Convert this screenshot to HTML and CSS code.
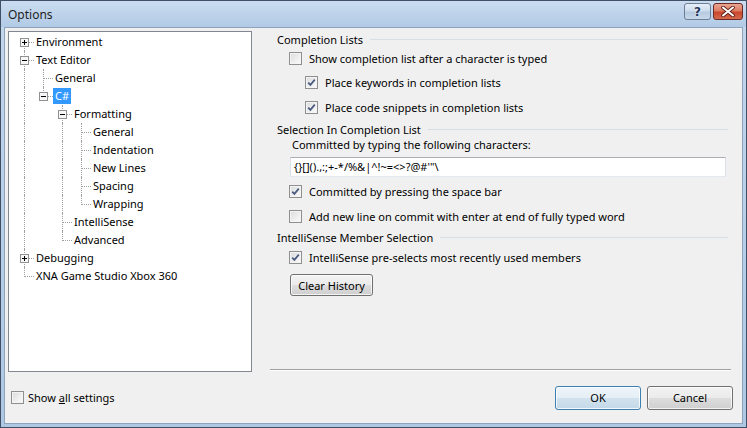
FILE: index.html
```html
<!DOCTYPE html>
<html>
<head>
<meta charset="utf-8">
<title>Options</title>
<link rel="stylesheet" href="styles.css">
</head>
<body>
<div class="window">
  <div class="titlebar">
    <span class="title">Options</span>
    <div class="caption-btns">
      <div class="cbtn help">?</div>
      <div class="cbtn close">
        <svg width="14" height="11" viewBox="0 0 14 11"><path d="M2 1.5 L12 9.5 M12 1.5 L2 9.5" stroke="#5b1c12" stroke-width="3.6" stroke-linecap="round"/><path d="M2 1.5 L12 9.5 M12 1.5 L2 9.5" stroke="#fff" stroke-width="2" stroke-linecap="round"/></svg>
      </div>
    </div>
  </div>
  <div class="client">
    <div class="main">
      <div class="tree">
        <div class="row"><span class="cell first"><span class="exp"><svg width="9" height="9"><rect x="0.5" y="0.5" width="8" height="8" fill="#f7f7f7" stroke="#919191"/><path d="M2 4.5h5M4.5 2v5" stroke="#000"/></svg></span></span><span class="label">Environment</span></div>
        <div class="row"><span class="cell tee"><span class="exp"><svg width="9" height="9"><rect x="0.5" y="0.5" width="8" height="8" fill="#f7f7f7" stroke="#919191"/><path d="M2 4.5h5" stroke="#000"/></svg></span></span><span class="label">Text Editor</span></div>
        <div class="row"><span class="cell pipe"></span><span class="cell tee"></span><span class="label">General</span></div>
        <div class="row"><span class="cell pipe"></span><span class="cell elbow"><span class="exp"><svg width="9" height="9"><rect x="0.5" y="0.5" width="8" height="8" fill="#f7f7f7" stroke="#919191"/><path d="M2 4.5h5" stroke="#000"/></svg></span></span><span class="label selected">C#</span></div>
        <div class="row"><span class="cell pipe"></span><span class="cell"></span><span class="cell tee"><span class="exp"><svg width="9" height="9"><rect x="0.5" y="0.5" width="8" height="8" fill="#f7f7f7" stroke="#919191"/><path d="M2 4.5h5" stroke="#000"/></svg></span></span><span class="label">Formatting</span></div>
        <div class="row"><span class="cell pipe"></span><span class="cell"></span><span class="cell pipe"></span><span class="cell tee"></span><span class="label">General</span></div>
        <div class="row"><span class="cell pipe"></span><span class="cell"></span><span class="cell pipe"></span><span class="cell tee"></span><span class="label">Indentation</span></div>
        <div class="row"><span class="cell pipe"></span><span class="cell"></span><span class="cell pipe"></span><span class="cell tee"></span><span class="label">New Lines</span></div>
        <div class="row"><span class="cell pipe"></span><span class="cell"></span><span class="cell pipe"></span><span class="cell tee"></span><span class="label">Spacing</span></div>
        <div class="row"><span class="cell pipe"></span><span class="cell"></span><span class="cell pipe"></span><span class="cell elbow"></span><span class="label">Wrapping</span></div>
        <div class="row"><span class="cell pipe"></span><span class="cell"></span><span class="cell tee"></span><span class="label">IntelliSense</span></div>
        <div class="row"><span class="cell pipe"></span><span class="cell"></span><span class="cell elbow"></span><span class="label">Advanced</span></div>
        <div class="row"><span class="cell tee"><span class="exp"><svg width="9" height="9"><rect x="0.5" y="0.5" width="8" height="8" fill="#f7f7f7" stroke="#919191"/><path d="M2 4.5h5M4.5 2v5" stroke="#000"/></svg></span></span><span class="label">Debugging</span></div>
        <div class="row"><span class="cell elbow"></span><span class="label">XNA Game Studio Xbox 360</span></div>
      </div>
      <div class="panel">
        <div class="settings">
          <div class="group-head h1"><span>Completion Lists</span><span class="rule"></span></div>
          <div class="check r-cb1 ind1"><span class="cb"></span><span>Show completion list after a character is typed</span></div>
          <div class="check r-cb2 ind2"><span class="cb checked"><svg width="11" height="11" viewBox="0 0 11 11"><path d="M2.2 5.6 L4.4 7.9 L8.8 2.6" fill="none" stroke="#4a5a80" stroke-width="1.7"/></svg></span><span>Place keywords in completion lists</span></div>
          <div class="check r-cb3 ind2"><span class="cb checked"><svg width="11" height="11" viewBox="0 0 11 11"><path d="M2.2 5.6 L4.4 7.9 L8.8 2.6" fill="none" stroke="#4a5a80" stroke-width="1.7"/></svg></span><span>Place code snippets in completion lists</span></div>
          <div class="group-head h2"><span>Selection In Completion List</span><span class="rule"></span></div>
          <div class="field-label">Committed by typing the following characters:</div>
          <div class="textbox">{}[]().,:;+-*/%&amp;|^!~=&lt;&gt;?@#'"\</div>
          <div class="check r-cb4 ind1"><span class="cb checked"><svg width="11" height="11" viewBox="0 0 11 11"><path d="M2.2 5.6 L4.4 7.9 L8.8 2.6" fill="none" stroke="#4a5a80" stroke-width="1.7"/></svg></span><span>Committed by pressing the space bar</span></div>
          <div class="check r-cb5 ind1"><span class="cb"></span><span>Add new line on commit with enter at end of fully typed word</span></div>
          <div class="group-head h3"><span>IntelliSense Member Selection</span><span class="rule"></span></div>
          <div class="check r-cb6 ind1"><span class="cb checked"><svg width="11" height="11" viewBox="0 0 11 11"><path d="M2.2 5.6 L4.4 7.9 L8.8 2.6" fill="none" stroke="#4a5a80" stroke-width="1.7"/></svg></span><span>IntelliSense pre-selects most recently used members</span></div>
          <div class="btn clear">Clear History</div>
        </div>
        <div class="sep"></div>
      </div>
    </div>
    <div class="bottom">
      <div class="check show-all"><span class="cb"></span><span>Show <u>a</u>ll settings</span></div>
      <div class="dlg-btns">
        <div class="btn dlg default">OK</div>
        <div class="btn dlg">Cancel</div>
      </div>
    </div>
  </div>
</div>
</body>
</html>
```
FILE: styles.css
```css
* { box-sizing: border-box; }
body {
  margin: 0;
  font-family: "Noto Sans", "Open Sans", sans-serif;
  font-size: 11px;
  color: #000;
  background: #fff;
}
.window {
  width: 747px;
  height: 428px;
  border: 1px solid #3f5064;
  background: linear-gradient(to bottom, #c3d7ec 0%, #b6cde7 60%, #aec7e3 100%);
  padding: 0 3px 3px 3px;
  display: flex;
  flex-direction: column;
}
.titlebar {
  height: 26px;
  flex: none;
  display: flex;
  align-items: center;
  justify-content: space-between;
  background: linear-gradient(to bottom, #cadcef 0%, #bfd4eb 45%, #b2cae6 100%);
  margin: 0 -3px;
  padding: 0 3px 0 7px;
}
.title {
  font-size: 12px;
  color: #1e1e1e;
  padding-top: 1px;
}
.caption-btns {
  display: flex;
  align-self: flex-start;
  margin-top: 2px;
  gap: 2px;
}
.cbtn {
  height: 17px;
  border: 1px solid #6c7f96;
  border-radius: 3px;
  display: flex;
  align-items: center;
  justify-content: center;
}
.help {
  width: 27px;
  background: linear-gradient(to bottom, #e6eef7 0%, #ccdcec 48%, #b5c9df 52%, #c7d8ea 100%);
  color: #22365a;
  font-family: "DejaVu Sans", sans-serif;
  font-size: 12px;
  font-weight: bold;
  text-shadow: 0 0 2px #fff;
  line-height: 1;
}
.close {
  width: 30px;
  border-color: #6b2a22;
  background: linear-gradient(to bottom, #e9a693 0%, #dc7c64 45%, #c9462b 55%, #d56a4e 100%);
}
.client {
  flex: 1;
  border: 1px solid #8da3bc;
  background: #f0f0f0;
  display: flex;
  flex-direction: column;
}
.main {
  height: 344px;
  flex: none;
  display: flex;
  padding: 3px 0 0 3px;
}
.tree {
  width: 244px;
  height: 341px;
  border: 1px solid #828790;
  background: #fff;
  padding: 1px 0 0 6px;
  flex: none;
}
.row {
  height: 18px;
  display: flex;
  align-items: center;
}
.cell {
  width: 19px;
  height: 18px;
  flex: none;
  position: relative;
  display: flex;
  align-items: center;
  padding-left: 5px;
}
.cell.pipe::before,
.cell.tee::before,
.cell.elbow::before,
.cell.first::before {
  content: "";
  position: absolute;
  left: 9px;
  border-left: 1px dotted #a0a0a0;
}
.cell.pipe::before, .cell.tee::before { top: 0; bottom: 0; }
.cell.elbow::before { top: 0; height: 10px; }
.cell.first::before { top: 9px; bottom: 0; }
.cell.tee::after,
.cell.elbow::after,
.cell.first::after {
  content: "";
  position: absolute;
  left: 10px;
  width: 9px;
  top: 9px;
  border-top: 1px dotted #a0a0a0;
}
.exp {
  width: 9px;
  height: 9px;
  position: relative;
  z-index: 1;
  display: block;
}
.exp svg { display: block; }
.label {
  padding: 0 2px;
  height: 16px;
  line-height: 16px;
  white-space: nowrap;
}
.label.selected {
  background: #3399ff;
  color: #fff;
}
.panel {
  margin-left: 18px;
  width: 461px;
  display: flex;
  flex-direction: column;
}
.settings {
  flex: 1;
  padding-left: 7px;
  padding-right: 3px;
}
.group-head {
  height: 16px;
  display: flex;
  align-items: center;
  white-space: nowrap;
}
.group-head .rule {
  flex: 1;
  border-top: 1px solid #d5dfe5;
  margin-left: 7px;
  margin-top: 1px;
}
.h2 { margin-top: 5px; }
.h3 { margin-top: 4px; }
.check {
  height: 18px;
  display: flex;
  align-items: center;
  white-space: nowrap;
}
.ind1 { padding-left: 12px; }
.ind2 { padding-left: 28px; }
.r-cb1 { margin-top: 2px; }
.r-cb2 { margin-top: 6px; }
.r-cb3 { margin-top: 7px; }
.r-cb4 { margin-top: 5px; }
.r-cb5 { margin-top: 7px; }
.r-cb6 { margin-top: 3px; }
.cb {
  width: 13px;
  height: 13px;
  flex: none;
  border: 1px solid #8f8f8f;
  background: linear-gradient(135deg, #d8dadd 0%, #eeeeee 55%, #fbfbfb 100%);
  box-shadow: inset 0 0 0 1px #f4f4f4;
  margin-right: 7px;
  display: flex;
  align-items: center;
  justify-content: center;
}
.cb svg { display: block; }
.field-label {
  height: 16px;
  line-height: 16px;
  padding-left: 15px;
}
.textbox {
  margin: 4px 0 0 13px;
  width: 436px;
  height: 20px;
  background: #fff;
  border: 1px solid #dbdfe6;
  border-top-color: #abadb3;
  border-bottom-color: #e3e9ef;
  padding-left: 3px;
  line-height: 18px;
  white-space: nowrap;
}
.btn {
  border: 1px solid #707070;
  border-radius: 3px;
  background: linear-gradient(to bottom, #f2f2f2 0%, #ebebeb 50%, #dddddd 51%, #cfcfcf 100%);
  box-shadow: inset 0 0 0 1px rgba(255,255,255,0.75);
  display: flex;
  align-items: center;
  justify-content: center;
  white-space: nowrap;
}
.clear {
  margin: 8px 0 0 13px;
  width: 83px;
  height: 22px;
}
.sep {
  height: 2px;
  border-top: 1px solid #a0a0a0;
  border-bottom: 1px solid #fff;
  margin-bottom: 1px;
  flex: none;
}
.bottom {
  flex: 1;
  display: flex;
  align-items: center;
  justify-content: space-between;
  padding: 0 9px 0 6px;
}
.show-all .cb { margin-right: 4px; }
.dlg-btns {
  display: flex;
  gap: 6px;
}
.dlg {
  width: 86px;
  height: 24px;
}
.dlg.default {
  border-color: #3c7fb1;
  background: linear-gradient(to bottom, #eef5fa 0%, #e4eef6 50%, #d2e2ee 51%, #c4d8e8 100%);
  box-shadow: inset 0 0 0 1px rgba(255,255,255,0.8);
}
```
